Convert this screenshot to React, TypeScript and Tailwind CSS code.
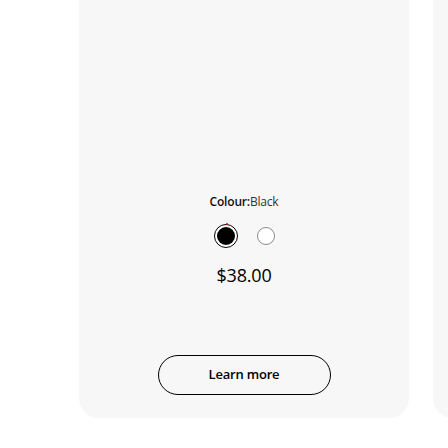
function Swatch({ color, selected }: { color: string; selected?: boolean }) {
  if (selected) {
    return (
      <button className="relative flex h-6 w-6 items-center justify-center rounded-full border border-black bg-white p-[2px]">
        <span className="block h-full w-full rounded-full" style={{ backgroundColor: color }} />
        <span className="absolute -top-[2px] left-[11px] h-[2px] w-[2px] rounded-full bg-[#ff0000]" />
      </button>
    );
  }
  return (
    <button
      className="h-[18px] w-[18px] rounded-full border border-[#8a8a8a]"
      style={{ backgroundColor: color }}
    />
  );
}

function ProductCard() {
  return (
    <div className="flex h-[418px] w-[330px] shrink-0 flex-col items-center rounded-b-[20px] bg-[#f7f7f7] pt-[194px]">
      <p className="text-[12px] leading-4 tracking-[-0.2px] text-black">
        <span className="font-semibold text-[#111]">Colour:</span>
        <span className="font-normal text-[#333]">Black</span>
      </p>
      <div className="mt-[14px] flex h-6 items-center gap-[19px]">
        <Swatch color="#000000" selected />
        <Swatch color="#ffffff" />
      </div>
      <p className="mt-[14px] text-[18px] leading-[27px] font-medium tracking-[-0.2px] text-black">$38.00</p>
      <button className="mt-[66px] h-10 w-[173px] rounded-full border border-black text-[13px] font-semibold tracking-[-0.2px] text-black">
        Learn more
      </button>
    </div>
  );
}

export default function App() {
  return (
    <div className="flex h-[448px] w-[448px] gap-6 overflow-hidden bg-white pl-[79px] font-['Open_Sans',sans-serif]">
      <ProductCard />
      <div className="h-[418px] w-[330px] shrink-0 rounded-b-[20px] bg-[#f7f7f7]" />
    </div>
  );
}
